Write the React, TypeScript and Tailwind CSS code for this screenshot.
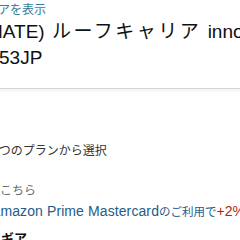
import React from 'react';

const jp = { fontFamily: '"Liberation Sans", "Noto Sans CJK JP", sans-serif' };

export default function App() {
  return (
    <div className="w-[240px] h-[240px] overflow-hidden bg-white text-[#0f1111]" style={jp}>
      {/* header: store link + product title */}
      <div className="pt-[2px] whitespace-nowrap">
        <p className="ml-[-26px] text-[12px] leading-[16px] text-[#357d96]">ストアを表示</p>
        <h1 className="mt-[1px] text-[19px] leading-[26px] font-normal">
          <span className="block ml-[-13px]">
            MATE) <span className="ml-[2px] mr-[1px] tracking-[2.5px]">ルーフキャリア</span> innovation
          </span>
          <span className="block ml-[-1px]">53JP</span>
        </h1>
      </div>

      {/* divider */}
      <div className="mt-[17px] h-px bg-[#d6d6d6]" />
      <div className="h-[4px] bg-gradient-to-b from-[#f2f2f2] to-white" />

      {/* plans */}
      <div className="mt-[50px] whitespace-nowrap">
        <p className="ml-[-8px] text-[12px] leading-[16px] text-[#333333]">2つのプランから選択</p>
      </div>

      <div className="mt-[24px] whitespace-nowrap">
        <p className="ml-[-36px] text-[12px] leading-[16px] text-[#6b6b6b]">詳細はこちら</p>
        <p className="mt-[3px] ml-[-9px] text-[14px] leading-[18px] text-[#245c8a]">
          <span className="tracking-[0.1px]">Amazon Prime Mastercard</span>
          <span className="text-[11.5px]">のご利用で</span>
          <span className="text-[#b12704]">+2%</span>
        </p>
        <p className="mt-[9px] ml-[-12px] text-[13px] leading-[18px] font-bold text-[#111111]">・ギア</p>
      </div>
    </div>
  );
}
